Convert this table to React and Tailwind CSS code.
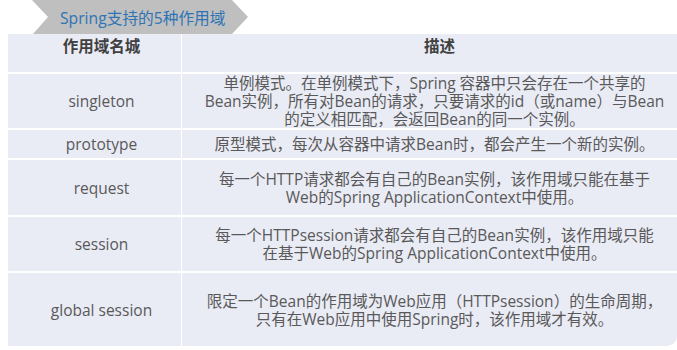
export default function App() {
  const font = { fontFamily: '"Open Sans", "Noto Sans CJK SC", sans-serif' };
  const rows = [
    {
      name: "singleton",
      h: "h-[56px]",
      lines: [
        "单例模式。在单例模式下，Spring 容器中只会存在一个共享的",
        "Bean实例，所有对Bean的请求，只要请求的id（或name）与Bean",
        "的定义相匹配，会返回Bean的同一个实例。",
      ],
    },
    {
      name: "prototype",
      h: "h-[30px]",
      lines: ["原型模式，每次从容器中请求Bean时，都会产生一个新的实例。"],
    },
    {
      name: "request",
      h: "h-[57px]",
      lines: [
        "每一个HTTP请求都会有自己的Bean实例，该作用域只能在基于",
        "Web的Spring ApplicationContext中使用。",
      ],
    },
    {
      name: "session",
      h: "h-[56px]",
      lines: [
        "每一个HTTPsession请求都会有自己的Bean实例，该作用域只能",
        "在基于Web的Spring ApplicationContext中使用。",
      ],
    },
    {
      name: "global session",
      h: "h-[75px]",
      lines: [
        "限定一个Bean的作用域为Web应用（HTTPsession）的生命周期，",
        "只有在Web应用中使用Spring时，该作用域才有效。",
      ],
    },
  ];
  return (
    <div className="w-[677px] h-[350px] bg-white overflow-hidden" style={font}>
      <div className="ml-[32px] w-[216px] h-[34px] bg-[#bfbfbf] [clip-path:polygon(0_0,200px_0,216px_17px,200px_34px,1px_34px,16px_17px)] flex items-center pl-[28px] pt-[3px]">
        <span className="text-[15.7px] leading-[19px] text-[#2e74b5]">Spring支持的5种作用域</span>
      </div>
      <div className="ml-[8px] w-[669px] bg-[#e9ebf5] rounded-br-[10px] text-[#595959] text-[15.5px] leading-[18px]">
        <div className="grid grid-cols-[174px_1fr] h-[38px]">
          <div className="border-r border-white flex justify-center pl-[14px] pt-[3px] font-bold text-[#404040]">作用域名城</div>
          <div className="flex justify-center pl-[20px] pt-[3px] font-bold text-[#404040]">描述</div>
        </div>
        {rows.map((r) => (
          <div key={r.name} className={`grid grid-cols-[174px_1fr] border-t-2 border-white ${r.h}`}>
            <div className="border-r border-white flex items-center justify-center pl-[14px]">{r.name}</div>
            <div className="flex flex-col items-center justify-center pl-[10px] text-center">
              {r.lines.map((l, i) => (
                <div key={i} className="whitespace-nowrap">{l}</div>
              ))}
            </div>
          </div>
        ))}
      </div>
    </div>
  );
}
